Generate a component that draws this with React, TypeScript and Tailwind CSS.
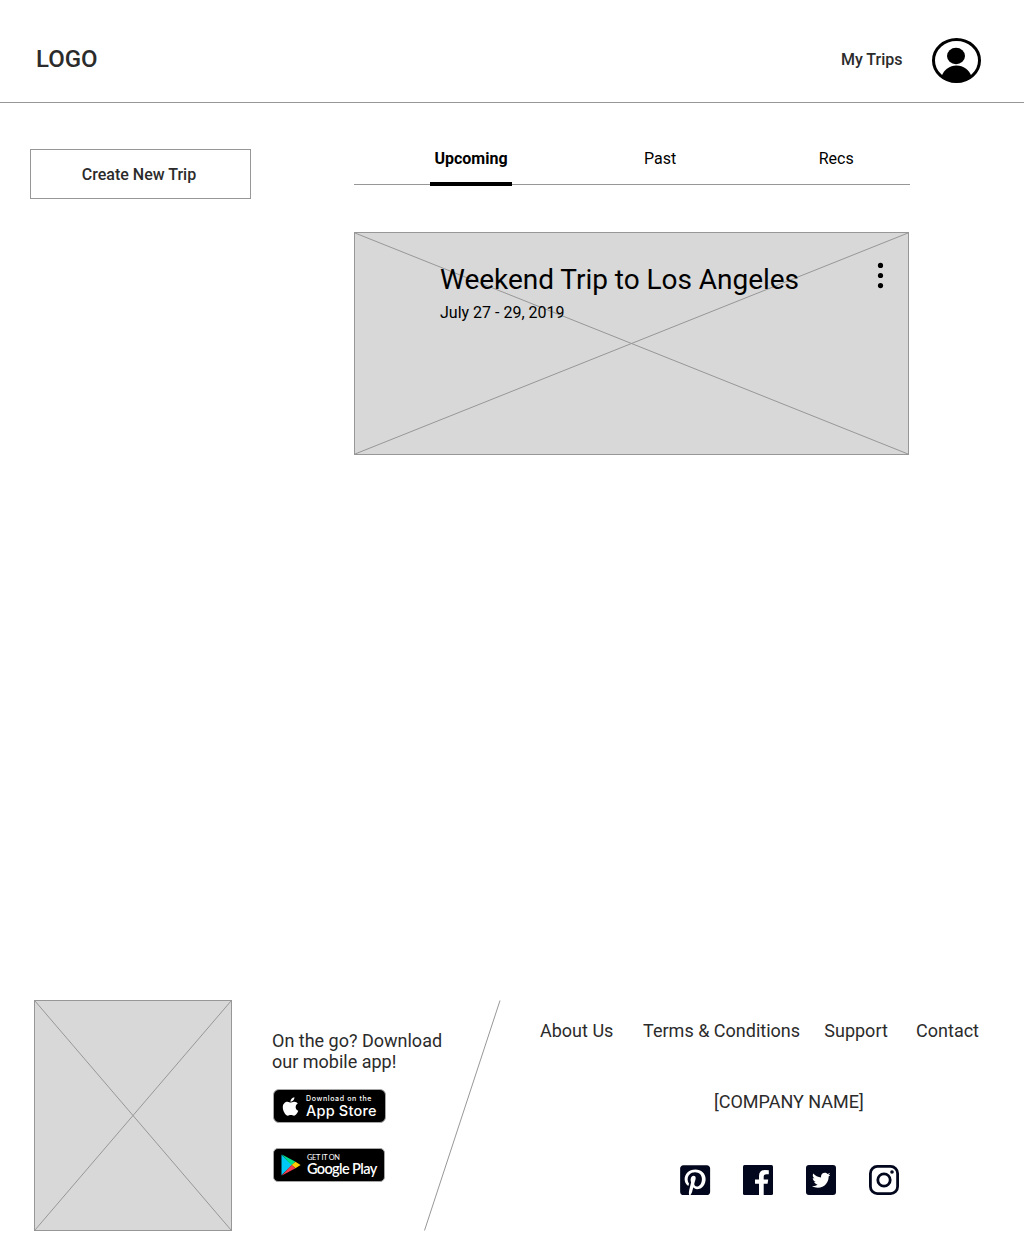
import { FaPinterestSquare, FaTwitter, FaApple } from "react-icons/fa";

function CrossLines({ w, h }: { w: number; h: number }) {
  return (
    <svg className="absolute inset-0" width={w} height={h} fill="none" stroke="#979797">
      <path d={`M1 1L${w - 1} ${h - 1}M${w - 1} 1L1 ${h - 1}`} />
    </svg>
  );
}

function Avatar() {
  return (
    <svg width="49" height="45" viewBox="0 0 49 45" className="ml-[29.5px]">
      <clipPath id="face">
        <ellipse cx="24.5" cy="22.5" rx="24" ry="22" />
      </clipPath>
      <ellipse cx="24.5" cy="22.5" rx="23" ry="21" fill="#fff" stroke="#000" strokeWidth="3" />
      <ellipse cx="24" cy="18" rx="9" ry="8.2" />
      <path clipPath="url(#face)" d="M9.5 38.5C12 31.5 17.5 27.5 24.5 27.5S37 31.5 39.5 38.5L35 45H14Z" />
    </svg>
  );
}

function Header() {
  return (
    <header className="flex h-[103px] items-center border-b border-[#979797] pl-9 pr-[43px] pt-[19px]">
      <div className="-mt-1 text-2xl font-medium leading-7 text-[#2b2b2b]">LOGO</div>
      <nav className="ml-auto flex items-center">
        <a className="-mt-0.5 text-base font-medium text-[#2b2b2b]">My Trips</a>
        <Avatar />
      </nav>
    </header>
  );
}

function Tabs() {
  return (
    <div className="flex h-9 w-[556px] border-b border-[#979797] text-base leading-5 text-black">
      <div className="relative ml-[75.5px] w-[83px] text-center font-bold">
        Upcoming
        <div className="absolute left-0 top-[33px] h-1 w-[82.5px] bg-black" />
      </div>
      <div className="ml-[131.5px]">Past</div>
      <div className="ml-[142.5px]">Recs</div>
    </div>
  );
}

function TripCard() {
  return (
    <section className="relative mt-[47px] h-[223px] w-[555px] bg-[#d8d8d8] outline outline-1 -outline-offset-1 outline-[#979797]">
      <CrossLines w={555} h={223} />
      <div className="relative flex justify-between pl-[86px] pr-[25px] pt-[30px]">
        <div className="text-black">
          <h1 className="text-[28px] leading-9 tracking-[-0.03px]">Weekend Trip to Los Angeles</h1>
          <p className="mt-[5px] text-base leading-5">July 27 - 29, 2019</p>
        </div>
        <svg width="7" height="28">
          <circle cx="3.5" cy="3.4" r="2.6" />
          <circle cx="3.5" cy="13.5" r="2.6" />
          <circle cx="3.5" cy="23.6" r="2.6" />
        </svg>
      </div>
    </section>
  );
}

function AppStoreBadge() {
  return (
    <div className="mt-[17px] ml-px flex h-[34px] w-[113px] items-center rounded-[6px] border border-[#a6a6a6] bg-black pl-[7px] text-white">
      <FaApple className="h-[21px] w-[19px]" />
      <div className="ml-[6px] whitespace-nowrap font-['Inter',sans-serif]">
        <div className="text-[7px] leading-[8px] tracking-[0.64px] font-medium">Download on the</div>
        <div className="text-[14.5px] leading-[15px] tracking-[0.2px] font-medium">App Store</div>
      </div>
    </div>
  );
}

function GooglePlayBadge() {
  return (
    <div className="mt-[25px] ml-px flex h-[34px] w-[112px] items-center rounded-[5px] border border-[#a6a6a6] bg-black pl-[7px] text-white">
      <svg width="20" height="22" viewBox="0 0 20 22">
        <path fill="#00c9f5" d="M.5.7v20.6L11 11Z" />
        <path fill="#00e08a" d="M.5.2L14.5 7.7L10.5 11.3Z" />
        <path fill="#ffcb05" d="M14.5 7.7L19.6 11L14.5 14.3L10.5 11Z" />
        <path fill="#f53b4e" d="M.5 21.8L14.5 14.3L10.5 11Z" />
      </svg>
      <div className="-mt-px ml-[6px] whitespace-nowrap font-['Lato',sans-serif]">
        <div className="text-[7.4px] leading-[9px] tracking-[-0.3px]">GET IT ON</div>
        <div className="text-[14.5px] leading-[14px] tracking-[-0.62px] font-semibold">Google Play</div>
      </div>
    </div>
  );
}

function SocialIcons() {
  return (
    <div className="mt-[53px] ml-[140px] flex gap-[33px] text-[#03071e]">
      <div className="flex size-[30px] items-center justify-center">
        <FaPinterestSquare className="size-[34.28px] shrink-0" />
      </div>
      <svg width="30" height="30" fill="currentColor">
        <rect width="30" height="30" rx="1.5" />
        <path fill="#fff" d="M16 30V18.8H12V14.4H16V11C16 7.2 18.3 5 21.8 5L25.8 5.2V9.2H23.4C21.2 9.2 20.7 10.2 20.7 11.8V14.4H25.2L24.6 18.8H20.7V30Z" />
      </svg>
      <div className="flex size-[30px] items-center justify-center rounded-[3px] bg-[#03071e]">
        <FaTwitter className="size-[18.5px] text-white" />
      </div>
      <svg width="30" height="30" fill="none" stroke="currentColor" strokeWidth="2.8">
        <rect x="1.4" y="1.4" width="27.2" height="27.2" rx="7" />
        <circle cx="15" cy="15" r="6.2" />
        <circle cx="23" cy="7" r="1.8" fill="currentColor" stroke="none" />
      </svg>
    </div>
  );
}

function Footer() {
  return (
    <footer className="mt-auto flex h-[241px] pl-[34px] text-lg leading-[21px] text-[#2b2b2b]">
      <div className="relative h-[231px] w-[198px] bg-[#d8d8d8] outline outline-1 -outline-offset-1 outline-[#979797]">
        <CrossLines w={198} h={231} />
      </div>
      <div className="ml-10 w-[152px] pt-[30px]">
        <p className="whitespace-nowrap">On the go? Download<br />our mobile app!</p>
        <AppStoreBadge />
        <GooglePlayBadge />
      </div>
      <svg width="77" height="231" className="shrink-0" fill="none" stroke="#979797">
        <path d="M76 .5L.5 230.5" />
      </svg>
      <div className="ml-[39px] w-[439px] pt-5">
        <nav className="flex justify-between whitespace-nowrap">
          <a>About Us</a>
          <a className="ml-[5.5px]">Terms &amp; Conditions</a>
          <a>Support</a>
          <a className="ml-1">Contact</a>
        </nav>
        <p className="mt-[50px] ml-[174px]">[COMPANY NAME]</p>
        <SocialIcons />
      </div>
    </footer>
  );
}

export default function App() {
  return (
    <div className="flex h-[1241px] w-[1024px] flex-col overflow-hidden bg-white font-['Roboto',sans-serif]">
      <Header />
      <main className="flex items-start pl-[30px] pt-[46px]">
        <button className="h-[50px] w-[221px] border border-[#979797] pr-[3px] pt-0.5 text-base font-medium text-[#2b2b2b]">
          Create New Trip
        </button>
        <div className="ml-[103px]">
          <Tabs />
          <TripCard />
        </div>
      </main>
      <Footer />
    </div>
  );
}
